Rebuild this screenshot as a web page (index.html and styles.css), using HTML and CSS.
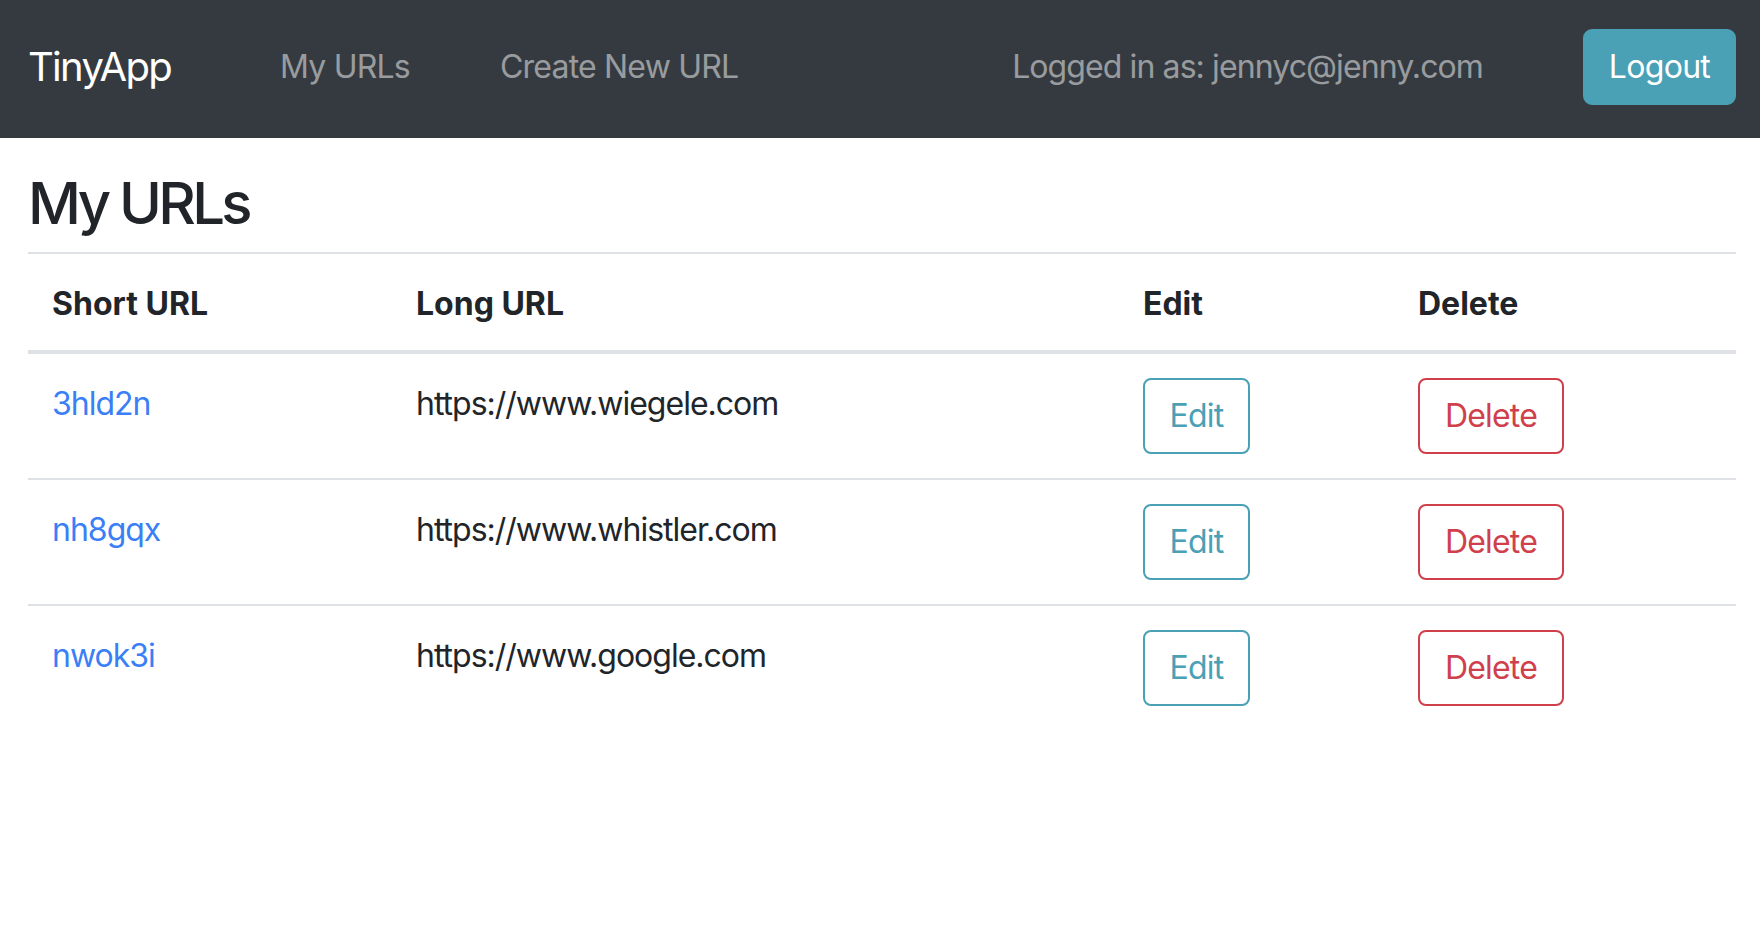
FILE: index.html
```html
<!DOCTYPE html>
<html lang="en">
<head>
<meta charset="utf-8">
<title>TinyApp - My URLs</title>
<link rel="stylesheet" href="styles.css">
</head>
<body>
<nav class="navbar">
  <a class="brand" href="#">TinyApp</a>
  <a class="nav-link nav-first" href="#">My URLs</a>
  <a class="nav-link" href="#">Create New URL</a>
  <span class="logged">Logged in as: jennyc@jenny.com</span>
  <button class="btn-logout" type="button">Logout</button>
</nav>
<main class="main">
  <h1 class="title">My URLs</h1>
  <table class="url-table">
    <colgroup>
      <col class="c-short">
      <col class="c-long">
      <col class="c-edit">
      <col class="c-del">
    </colgroup>
    <thead>
      <tr>
        <th>Short URL</th>
        <th>Long URL</th>
        <th>Edit</th>
        <th>Delete</th>
      </tr>
    </thead>
    <tbody>
      <tr>
        <td><a class="short" href="#">3hld2n</a></td>
        <td>https://www.wiegele.com</td>
        <td><button class="btn btn-edit" type="button">Edit</button></td>
        <td><button class="btn btn-delete" type="button">Delete</button></td>
      </tr>
      <tr>
        <td><a class="short" href="#">nh8gqx</a></td>
        <td>https://www.whistler.com</td>
        <td><button class="btn btn-edit" type="button">Edit</button></td>
        <td><button class="btn btn-delete" type="button">Delete</button></td>
      </tr>
      <tr>
        <td><a class="short" href="#">nwok3i</a></td>
        <td>https://www.google.com</td>
        <td><button class="btn btn-edit" type="button">Edit</button></td>
        <td><button class="btn btn-delete" type="button">Delete</button></td>
      </tr>
    </tbody>
  </table>
</main>
</body>
</html>
```

FILE: styles.css
```css
* { box-sizing: border-box; }

html, body {
  margin: 0;
  padding: 0;
  background: #ffffff;
}

body {
  font-family: Inter, "Noto Sans", "Liberation Sans", sans-serif;
  font-size: 32px;
  line-height: 48px;
  color: #212529;
}

/* ---------- navbar ---------- */
.navbar {
  display: flex;
  align-items: center;
  height: 138px;
  padding: 29px 24px 34px 28px;
  background: #343a40;
}

.brand {
  width: 252px;
  font-size: 40px;
  line-height: 60px;
  color: #ffffff;
  text-decoration: none;
  letter-spacing: -1.7px;
}

.nav-link {
  color: rgba(255, 255, 255, 0.5);
  text-decoration: none;
  letter-spacing: -0.8px;
}

.nav-first {
  width: 220px;
}

.logged {
  margin-left: auto;
  color: rgba(255, 255, 255, 0.5);
  letter-spacing: -0.9px;
}

.btn-logout {
  margin-left: 100px;
  width: 153px;
  height: 76px;
  padding: 0;
  border: 2px solid #4aa0b5;
  border-radius: 9px;
  background: #4aa0b5;
  color: #ffffff;
  font-family: inherit;
  font-size: 32px;
  line-height: 72px;
  letter-spacing: -0.7px;
  text-align: center;
}

/* ---------- main ---------- */
.main {
  padding: 29px 24px 0 28px;
}

.title {
  margin: 0 0 13px 0;
  font-size: 58px;
  line-height: 72px;
  font-weight: 500;
  letter-spacing: -3.7px;
}

.url-table {
  width: 100%;
  border-collapse: collapse;
}

.c-short { width: 364px; }
.c-long { width: 727px; }
.c-edit { width: 275px; }
.c-del { width: auto; }

.url-table th,
.url-table td {
  padding: 24px;
  text-align: left;
  vertical-align: top;
  border-top: 2px solid #dee2e6;
  letter-spacing: -1px;
}

.url-table td {
  line-height: 51px;
}

.url-table th {
  padding: 26px 24px 22px;
  font-weight: 700;
  letter-spacing: 0;
  border-bottom: 4px solid #dee2e6;
}

.short {
  color: #3a7ff6;
  text-decoration: none;
}

.btn {
  display: inline-block;
  height: 76px;
  padding: 0;
  border: 2px solid;
  border-radius: 8px;
  background: #ffffff;
  font-family: inherit;
  font-size: 32px;
  line-height: 72px;
  letter-spacing: -0.8px;
  text-align: center;
  vertical-align: top;
}

.btn-edit {
  width: 107px;
  color: #4aa0b5;
  border-color: #4aa0b5;
}

.btn-delete {
  width: 146px;
  color: #cf404c;
  border-color: #cf404c;
}
```
